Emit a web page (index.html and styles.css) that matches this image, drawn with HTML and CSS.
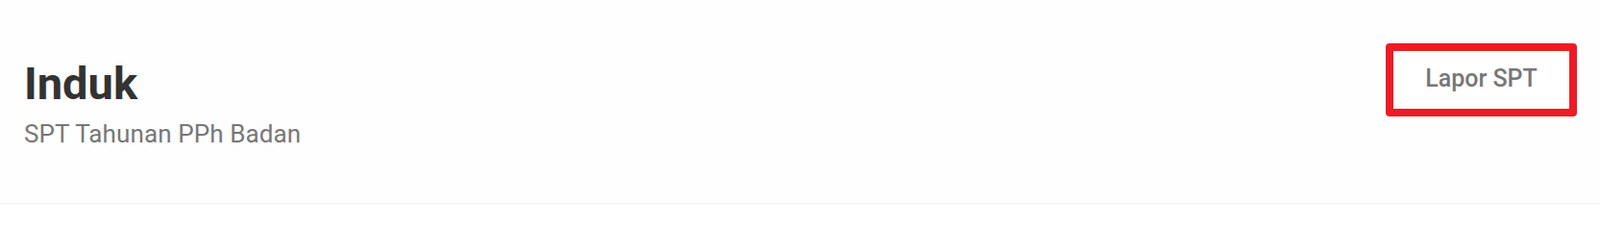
FILE: index.html
```html
<!DOCTYPE html>
<html lang="id">
<head>
<meta charset="utf-8">
<title>Induk</title>
<link rel="stylesheet" href="styles.css">
</head>
<body>
<header class="page-header">
  <div class="title-block">
    <h1 class="title">Induk</h1>
    <p class="subtitle">SPT Tahunan PPh Badan</p>
  </div>
  <button class="btn-lapor" type="button">Lapor SPT</button>
</header>
</body>
</html>
```

FILE: styles.css
```css
html, body {
  margin: 0;
  padding: 0;
  background: #ffffff;
}

body {
  font-family: Roboto, "Liberation Sans", Arial, sans-serif;
}

.page-header {
  box-sizing: border-box;
  height: 212px;
  padding: 45px 24px 0 25px;
  display: flex;
  justify-content: space-between;
  align-items: flex-start;
  border-bottom: 1px solid #f0f0f0;
  background: #fefefe;
}

.title-block {
  margin-top: 14px;
}

.title {
  margin: 0;
  font-size: 47px;
  line-height: 55px;
  font-weight: 700;
  color: #333333;
}

.subtitle {
  margin: 10px 0 0 0;
  font-size: 26px;
  line-height: 30px;
  font-weight: 400;
  letter-spacing: 0.1px;
  color: #777777;
}

.btn-lapor {
  box-sizing: border-box;
  width: 199px;
  height: 76px;
  padding: 0 0 4px 0;
  border: 8px solid #ed1c24;
  border-radius: 4px;
  background: #ffffff;
  font-family: Roboto, "Liberation Sans", Arial, sans-serif;
  font-size: 25px;
  font-weight: 500;
  color: #777777;
  display: flex;
  align-items: center;
  justify-content: center;
  cursor: pointer;
}
```
